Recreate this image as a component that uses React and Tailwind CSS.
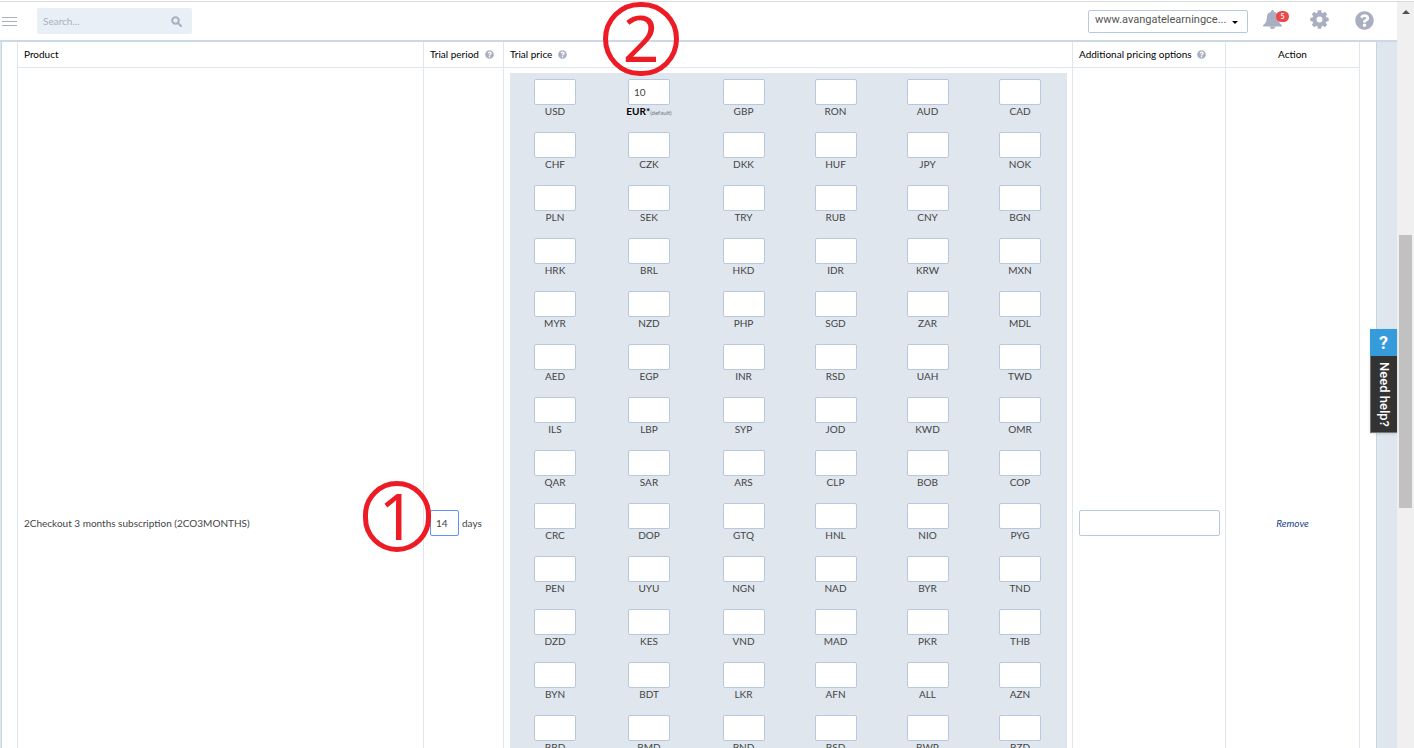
import { FaQuestionCircle } from 'react-icons/fa';

const CURRENCIES = [
  'USD', 'EUR', 'GBP', 'RON', 'AUD', 'CAD',
  'CHF', 'CZK', 'DKK', 'HUF', 'JPY', 'NOK',
  'PLN', 'SEK', 'TRY', 'RUB', 'CNY', 'BGN',
  'HRK', 'BRL', 'HKD', 'IDR', 'KRW', 'MXN',
  'MYR', 'NZD', 'PHP', 'SGD', 'ZAR', 'MDL',
  'AED', 'EGP', 'INR', 'RSD', 'UAH', 'TWD',
  'ILS', 'LBP', 'SYP', 'JOD', 'KWD', 'OMR',
  'QAR', 'SAR', 'ARS', 'CLP', 'BOB', 'COP',
  'CRC', 'DOP', 'GTQ', 'HNL', 'NIO', 'PYG',
  'PEN', 'UYU', 'NGN', 'NAD', 'BYR', 'TND',
  'DZD', 'KES', 'VND', 'MAD', 'PKR', 'THB',
  'BYN', 'BDT', 'LKR', 'AFN', 'ALL', 'AZN',
  'BBD', 'BMD', 'BND', 'BSD', 'BWP', 'BZD',
  'FJD', 'GYD', 'JMD', 'KYD', 'KZT', 'LRD',
  'MMK', 'MOP', 'MUR', 'MVR', 'NPR', 'PAB',
  'PGK', 'SBD', 'SCR', 'TTD', 'XCD', 'XOF',
  'GEL', 'MGA', 'ISK', 'TOP', 'VUV', 'WST',
];

const DEFAULT_CURRENCY = 'EUR';

const FIELD = 'h-[26px] rounded-[2px] border border-[#b9c8dc] bg-white text-[#444] outline-none';
const HEAD = 'h-[26px] border-r border-b border-[#dfe6ee] px-[6px] pb-[2px] font-normal text-black whitespace-nowrap';
const MARKER = "absolute flex items-center justify-center rounded-full border-[5px] border-[#ed1c24] pb-[2px] font-['Noto_Sans',sans-serif] text-[64px] leading-none text-[#ed1c24]";

const GEAR_TEETH = [0, 45, 90, 135, 180, 225, 270, 315];

function BellIcon() {
  return (
    <svg className="size-[19px]" viewBox="0 0 19 19" fill="currentColor">
      <path d="M9.5 0c.8 0 1.4.6 1.4 1.4v.4c2.6.6 4.2 2.6 4.2 5.2 0 4.200 1.200 6.200 3.900 8.300 0 .8-.5 1.200-1.200 1.200H1.200C.500 16.500 0 16.100 0 15.300 2.700 13.200 3.900 11.200 3.900 7c0-2.600 1.600-4.600 4.200-5.200v-.4C8.100.600 8.700 0 9.500 0Z" />
      <path d="M6.800 16.500h5.400a2.700 2.500 0 0 1-5.400 0Z" />
    </svg>
  );
}

function GearIcon() {
  return (
    <svg className="size-[19px]" viewBox="-10 -10 20 20">
      <circle r="5.300" fill="none" stroke="currentColor" strokeWidth="4.400" />
      {GEAR_TEETH.map((angle) => (
        <path key={angle} d="M-2.300-6.800-1.700-9.700h3.400l.6 2.900Z" fill="currentColor" transform={`rotate(${angle})`} />
      ))}
    </svg>
  );
}

function SearchIcon() {
  return (
    <svg className="size-[11px]" viewBox="0 0 11 11" fill="none" stroke="currentColor" strokeWidth="2">
      <circle cx="4.500" cy="4.500" r="3.300" />
      <path d="m7 7 3.200 3.200" strokeLinecap="round" />
    </svg>
  );
}

function Hint() {
  return <FaQuestionCircle className="ml-[3px] inline-block size-[9px] text-[#a9afc0]" />;
}

function PriceField({ code }) {
  const isDefault = code === DEFAULT_CURRENCY;
  return (
    <div className="flex flex-col items-center">
      <input
        id={`price-${code}`}
        type="text"
        defaultValue={isDefault ? '10' : ''}
        className={`${FIELD} w-[42px] px-[5px]`}
      />
      <label htmlFor={`price-${code}`} className="flex h-3 items-baseline leading-[12px]">
        {isDefault ? (
          <>
            <span className="font-bold text-black">{code}*</span>
            <span className="text-[6px] text-[#70757f]">(default)</span>
          </>
        ) : (
          code
        )}
      </label>
    </div>
  );
}

function TopBar() {
  return (
    <header className="flex h-10 shrink-0 items-center border-b-2 border-[#cbd9e7] bg-white">
      <button type="button" aria-label="Menu" className="ml-[2px] flex w-[15px] flex-col gap-[3px]">
        <span className="h-px w-full bg-[#a9afc0]" />
        <span className="h-px w-full bg-[#a9afc0]" />
        <span className="h-px w-full bg-[#a9afc0]" />
      </button>

      <form className="ml-5 flex h-[26px] w-[155px] items-center rounded-[2px] bg-[#e8eff6]">
        <input
          type="text"
          aria-label="Search"
          placeholder="Search..."
          className="w-[123px] bg-transparent pl-[6px] placeholder-[#a9afc0] outline-none"
        />
        <button type="button" aria-label="Run search" className="flex h-[26px] w-8 items-center justify-center text-[#a9afc0]">
          <SearchIcon />
        </button>
      </form>

      <div className="ml-auto flex items-center pr-[23px]">
        <div className="relative">
          <select
            aria-label="Account"
            className="h-[23px] w-[160px] appearance-none rounded-[2px] border border-[#b9c8dc] bg-white pr-4 pb-[2px] pl-[6px] font-['Roboto',sans-serif] text-[11px] text-[#555] outline-none"
          >
            <option>www.avangatelearningce...</option>
          </select>
          <span className="pointer-events-none absolute top-[11px] right-[10px] border-x-[3px] border-t-[3px] border-x-transparent border-t-black" />
        </div>
        <button type="button" aria-label="Notifications" className="relative ml-[15px] pb-1 text-[#a9afc0]">
          <BellIcon />
          <span className="absolute top-px left-[13px] flex h-[11px] w-[13px] items-center justify-center rounded-full bg-[#ee4749] text-[7px] font-bold text-white">
            5
          </span>
        </button>
        <button type="button" aria-label="Settings" className="ml-7 pb-1 text-[#a9afc0]">
          <GearIcon />
        </button>
        <button type="button" aria-label="Help" className="ml-[26px] pb-px text-[#a9afc0]">
          <FaQuestionCircle className="size-[19px]" />
        </button>
      </div>
    </header>
  );
}

function TrialTable() {
  return (
    <table className="w-full table-fixed border-separate border-spacing-0 border-l border-[#dfe6ee]">
      <colgroup>
        <col />
        <col className="w-[80px]" />
        <col className="w-[569px]" />
        <col className="w-[153px]" />
        <col className="w-[134px]" />
      </colgroup>
      <thead>
        <tr>
          <th className={`${HEAD} text-left`}>Product</th>
          <th className={`${HEAD} text-left`}>Trial period <Hint /></th>
          <th className={`${HEAD} text-left`}>Trial price <Hint /></th>
          <th className={`${HEAD} text-left`}>Additional pricing options <Hint /></th>
          <th className={`${HEAD} text-center`}>Action</th>
        </tr>
      </thead>
      <tbody>
        <tr>
          <td className="border-r border-[#dfe6ee] px-[6px]">2Checkout 3 months subscription (2CO3MONTHS)</td>
          <td className="border-r border-[#dfe6ee] px-[6px]">
            <div className="flex items-center gap-[3px]">
              <input
                id="trial-days"
                type="text"
                defaultValue="14"
                className="h-[26px] w-[29px] rounded-[2px] border border-[#5c92fa] bg-white px-[5px] outline-none"
              />
              <label htmlFor="trial-days">days</label>
            </div>
          </td>
          <td className="border-r border-[#dfe6ee] py-[5px] pr-[5px] pl-[6px]">
            <div className="grid grid-cols-[90fr_98fr_91fr_93fr_91fr_94fr] gap-y-[15px] bg-[#dfe6ee] pt-[6px] pb-[7px]">
              {CURRENCIES.map((code) => (
                <PriceField key={code} code={code} />
              ))}
            </div>
          </td>
          <td className="border-r border-[#dfe6ee] pr-[5px] pl-[6px]">
            <input type="text" aria-label="Additional pricing options" className={`${FIELD} block w-full px-[5px]`} />
          </td>
          <td className="border-r border-[#dfe6ee] text-center">
            <a href="#remove" className="text-[#1d3f94] italic">Remove</a>
          </td>
        </tr>
      </tbody>
    </table>
  );
}

function ScrollBar() {
  return (
    <div className="flex w-[17px] shrink-0 flex-col items-center bg-[#f0f0f0] pt-2">
      <span className="border-x-[4px] border-b-[4px] border-x-transparent border-b-[#505050]" />
      <span className="h-[30%] shrink-0" />
      <span className="h-[37%] w-[13px] bg-[#c1c1c1]" />
    </div>
  );
}

function HelpTab() {
  return (
    <button type="button" className="absolute top-[329px] right-[17px] flex w-[27px] flex-col font-['Roboto',sans-serif] text-white shadow-sm">
      <span className="flex h-[27px] w-full items-center justify-center bg-[#369bdb] text-[18px] font-bold">?</span>
      <span className="flex h-[77px] w-full items-center justify-center border-b border-l border-[#777] bg-[#333] pr-px text-[13px] font-medium whitespace-nowrap [writing-mode:vertical-rl]">
        Need help?
      </span>
    </button>
  );
}

export default function App() {
  return (
    <div className="relative flex h-screen flex-col overflow-hidden bg-white pt-px font-['Lato',sans-serif] text-[10px] leading-[14px] text-[#444]">
      <div className="flex min-h-0 flex-1 border-t border-[#d8dcde]">
        <div className="flex min-w-0 flex-1 flex-col">
          <TopBar />
          <main className="min-h-0 flex-1 overflow-hidden bg-[#dfe6ee] pr-5 pl-px">
            <div className="border-x border-[#c5d5e4] bg-white pr-4 pl-[15px]">
              <TrialTable />
            </div>
          </main>
        </div>
        <ScrollBar />
      </div>

      {/* Step markers */}
      <div className={`${MARKER} top-[2px] left-[603px] h-[74px] w-[76px]`}>2</div>
      <div className={`${MARKER} top-[481px] left-[363px] h-[71px] w-[68px]`}>1</div>

      <HelpTab />
    </div>
  );
}
